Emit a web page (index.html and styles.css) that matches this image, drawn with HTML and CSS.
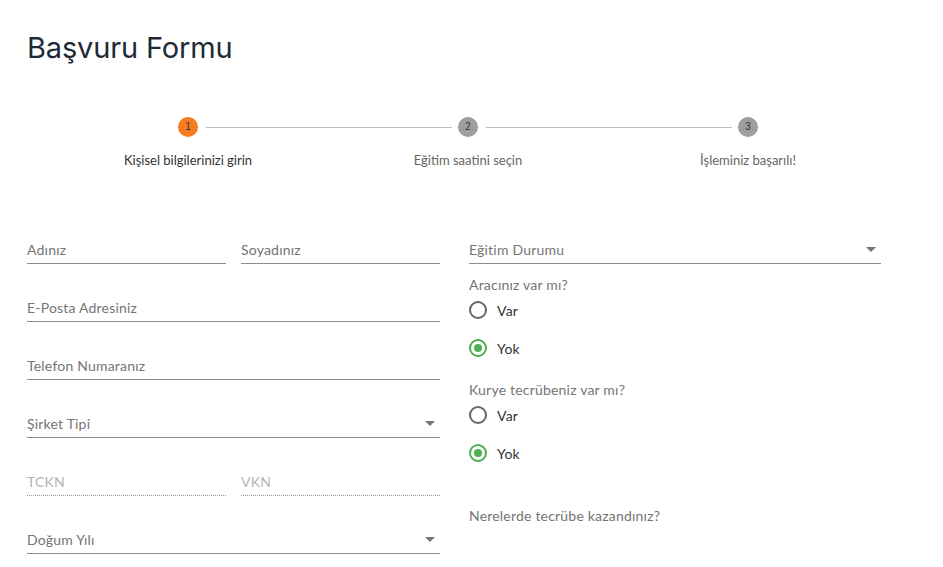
FILE: index.html
```html
<!DOCTYPE html>
<html lang="tr">
<head>
<meta charset="utf-8">
<link rel="stylesheet" href="styles.css">
</head>
<body>
<div class="page">
  <h1 class="title">Başvuru Formu</h1>

  <div class="stepper">
    <div class="step-track">
      <span class="dot dot-active">1</span>
      <span class="track-line"></span>
      <span class="dot">2</span>
      <span class="track-line"></span>
      <span class="dot">3</span>
    </div>
    <div class="step-labels">
      <span class="step-label step-label-active">Kişisel bilgilerinizi girin</span>
      <span class="step-label">Eğitim saatini seçin</span>
      <span class="step-label">İşleminiz başarılı!</span>
    </div>
  </div>

  <div class="form">
    <div class="col">
      <div class="pair">
        <div class="field"><span class="label">Adınız</span></div>
        <div class="field"><span class="label">Soyadınız</span></div>
      </div>
      <div class="field"><span class="label">E-Posta Adresiniz</span></div>
      <div class="field"><span class="label">Telefon Numaranız</span></div>
      <div class="field select"><span class="label">Şirket Tipi</span><span class="arrow"></span></div>
      <div class="pair">
        <div class="field disabled"><span class="label">TCKN</span></div>
        <div class="field disabled"><span class="label">VKN</span></div>
      </div>
      <div class="field select"><span class="label">Doğum Yılı</span><span class="arrow"></span></div>
    </div>

    <div class="col">
      <div class="field select"><span class="label">Eğitim Durumu</span><span class="arrow"></span></div>
      <div class="question q-first">Aracınız var mı?</div>
      <div class="radio"><span class="circle"></span><span class="radio-text">Var</span></div>
      <div class="radio"><span class="circle checked"></span><span class="radio-text">Yok</span></div>
      <div class="question q-second">Kurye tecrübeniz var mı?</div>
      <div class="radio"><span class="circle"></span><span class="radio-text">Var</span></div>
      <div class="radio"><span class="circle checked"></span><span class="radio-text">Yok</span></div>
      <div class="question q-third">Nerelerde tecrübe kazandınız?</div>
    </div>
  </div>
</div>
</body>
</html>
```

FILE: styles.css
```css
* { box-sizing: border-box; }
html, body { margin: 0; padding: 0; background: #fff; }
body {
  font-family: Lato, "Open Sans", sans-serif;
  color: #333;
  overflow: hidden;
}
.page {
  padding: 0 0 0 27px;
  width: 943px;
  height: 567px;
}
.title {
  margin: 0;
  padding-top: 29px;
  font-family: Inter, "Open Sans", sans-serif;
  font-weight: 400;
  font-size: 29px;
  line-height: 38px;
  color: #1e2a36;
  letter-spacing: -0.15px;
}
.stepper {
  margin-top: 50px;
}
.step-track {
  display: flex;
  align-items: center;
  width: 580px;
  margin-left: 151px;
  height: 20px;
}
.dot {
  width: 20px;
  height: 20px;
  border-radius: 50%;
  background: #9e9e9e;
  color: #333;
  font-family: "Liberation Sans", Arial, sans-serif;
  font-size: 10px;
  line-height: 20px;
  text-align: center;
  flex: none;
}
.dot-active { background: #f57c1f; }
.track-line {
  flex: 1;
  height: 1px;
  background: #bdbdbd;
  margin: 0 6px 0 8px;
}
.step-labels {
  display: grid;
  grid-template-columns: repeat(3, 280px);
  margin-left: 21px;
  margin-top: 15px;
}
.step-label {
  text-align: center;
  font-size: 13px;
  line-height: 16px;
  color: #666;
}
.step-label-active { color: #333; }

.form {
  display: grid;
  grid-template-columns: 413px 412px;
  column-gap: 29px;
  margin-top: 38px;
}
.col { display: flex; flex-direction: column; }
.pair {
  display: grid;
  grid-template-columns: 199px 199px;
  column-gap: 15px;
}
.field {
  height: 58px;
  display: flex;
  align-items: flex-end;
  justify-content: space-between;
  padding-bottom: 5px;
  border-bottom: 1px solid #8c8c8c;
}
.field.disabled { border-bottom: 1px dotted #9a9a9a; }
.label {
  font-size: 14px;
  line-height: 17px;
  color: #757575;
  letter-spacing: 0.2px;
}
.field.disabled .label { color: #b3b3b3; }
.arrow {
  width: 0;
  height: 0;
  border-left: 5px solid transparent;
  border-right: 5px solid transparent;
  border-top: 5px solid #757575;
  margin: 0 5px 6px 0;
}
.question {
  font-size: 14px;
  line-height: 14px;
  color: #757575;
  letter-spacing: 0.2px;
}
.q-first { margin-top: 14px; }
.q-second { margin-top: 15px; }
.q-third { margin-top: 36px; }
.radio {
  height: 38px;
  display: flex;
  align-items: center;
  padding-bottom: 2px;
}
.circle {
  width: 18px;
  height: 18px;
  border-radius: 50%;
  border: 2px solid #666;
  display: flex;
  align-items: center;
  justify-content: center;
  flex: none;
}
.circle.checked { border-color: #4caf50; }
.circle.checked::after {
  content: "";
  width: 8px;
  height: 8px;
  border-radius: 50%;
  background: #4caf50;
}
.radio-text {
  margin-left: 10px;
  font-size: 14px;
  color: #333;
  letter-spacing: 0.2px;
}
```
